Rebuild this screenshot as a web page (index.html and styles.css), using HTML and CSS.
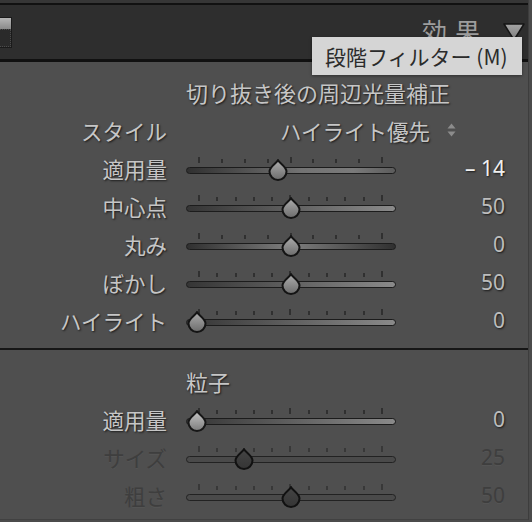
FILE: index.html
```html
<!DOCTYPE html>
<html lang="ja">
<head>
    <meta charset="UTF-8">
    <meta name="viewport" content="width=device-width, initial-scale=1.0">
    <title>効果</title>
    <link rel="stylesheet" href="styles.css">
</head>
<body>
    <!-- gradients shared by the thumbs and the collapse arrow -->
    <svg class="defs" width="0" height="0" aria-hidden="true">
        <defs>
            <linearGradient id="thumbFill" x1="0" y1="0" x2="0" y2="1">
                <stop offset="0" stop-color="#adadad"/>
                <stop offset="1" stop-color="#6c6c6c"/>
            </linearGradient>
            <linearGradient id="thumbOff" x1="0" y1="0" x2="0" y2="1">
                <stop offset="0" stop-color="#444"/>
                <stop offset="1" stop-color="#353535"/>
            </linearGradient>
            <linearGradient id="arrowFill" x1="0" y1="0" x2="0" y2="1">
                <stop offset="0" stop-color="#a5a5a5"/>
                <stop offset="1" stop-color="#7c7c7c"/>
            </linearGradient>
        </defs>
    </svg>

    <div class="panel">
        <div class="top-strip"></div>

        <!-- Header panel -->
        <div class="panel-header">
            <div class="switch"><span class="switch-on"></span><span class="switch-off"></span></div>
            <div class="header-right">
                <h2 class="panel-title">効果</h2>
                <svg class="collapse" width="22" height="18" viewBox="0 0 22 18">
                    <polygon points="1,1 21,1 11,17" fill="url(#arrowFill)" stroke="#151515" stroke-width="1.5" stroke-linejoin="round"/>
                </svg>
            </div>
        </div>

        <div class="tooltip">段階フィルター (M)</div>

        <!-- Vignette -->
        <section class="group group-vignette">
            <div class="group-title">切り抜き後の周辺光量補正</div>

            <div class="row">
                <span class="label">スタイル</span>
                <span class="select">ハイライト優先
                    <svg class="updown" width="9" height="16" viewBox="0 0 9 16">
                        <polygon points="0.5,6.5 8.5,6.5 4.5,1.5" fill="#8c8c8c"/>
                        <polygon points="0.5,9.5 8.5,9.5 4.5,14.5" fill="#8c8c8c"/>
                    </svg>
                </span>
            </div>

            <div class="row">
                <span class="label">適用量</span>
                <div class="slider">
                    <div class="ticks">
                        <i class="tall"></i><i></i><i></i><i></i><i class="tall"></i><i></i><i></i><i></i><i class="tall"></i>
                    </div>
                    <div class="track track-amount"></div>
                    <svg class="thumb" style="left: 81px" width="22" height="22" viewBox="0 0 22 22"><path d="M11 1.2C12.6 4.2 19.5 7.6 19.5 12.5A8.5 8.5 0 0 1 2.5 12.5C2.5 7.6 9.4 4.2 11 1.2Z"/></svg>
                </div>
                <span class="value value-active">– 14</span>
            </div>

            <div class="row">
                <span class="label">中心点</span>
                <div class="slider">
                    <div class="ticks">
                        <i class="tall"></i><i></i><i></i><i></i><i></i><i class="tall"></i><i></i><i></i><i></i><i></i><i class="tall"></i>
                    </div>
                    <div class="track"></div>
                    <svg class="thumb" style="left: 94px" width="22" height="22" viewBox="0 0 22 22"><path d="M11 1.2C12.6 4.2 19.5 7.6 19.5 12.5A8.5 8.5 0 0 1 2.5 12.5C2.5 7.6 9.4 4.2 11 1.2Z"/></svg>
                </div>
                <span class="value">50</span>
            </div>

            <div class="row">
                <span class="label">丸み</span>
                <div class="slider">
                    <div class="ticks">
                        <i class="tall"></i><i></i><i></i><i></i><i class="tall"></i><i></i><i></i><i></i><i class="tall"></i>
                    </div>
                    <div class="track track-round"></div>
                    <svg class="thumb" style="left: 94px" width="22" height="22" viewBox="0 0 22 22"><path d="M11 1.2C12.6 4.2 19.5 7.6 19.5 12.5A8.5 8.5 0 0 1 2.5 12.5C2.5 7.6 9.4 4.2 11 1.2Z"/></svg>
                </div>
                <span class="value">0</span>
            </div>

            <div class="row">
                <span class="label">ぼかし</span>
                <div class="slider">
                    <div class="ticks">
                        <i class="tall"></i><i></i><i></i><i></i><i></i><i class="tall"></i><i></i><i></i><i></i><i></i><i class="tall"></i>
                    </div>
                    <div class="track"></div>
                    <svg class="thumb" style="left: 94px" width="22" height="22" viewBox="0 0 22 22"><path d="M11 1.2C12.6 4.2 19.5 7.6 19.5 12.5A8.5 8.5 0 0 1 2.5 12.5C2.5 7.6 9.4 4.2 11 1.2Z"/></svg>
                </div>
                <span class="value">50</span>
            </div>

            <div class="row">
                <span class="label">ハイライト</span>
                <div class="slider">
                    <div class="ticks">
                        <i class="tall"></i><i></i><i></i><i></i><i></i><i class="tall"></i><i></i><i></i><i></i><i></i><i class="tall"></i>
                    </div>
                    <div class="track"></div>
                    <svg class="thumb" style="left: 0px" width="22" height="22" viewBox="0 0 22 22"><path d="M11 1.2C12.6 4.2 19.5 7.6 19.5 12.5A8.5 8.5 0 0 1 2.5 12.5C2.5 7.6 9.4 4.2 11 1.2Z"/></svg>
                </div>
                <span class="value">0</span>
            </div>
        </section>

        <div class="divider"></div>

        <!-- Grain -->
        <section class="group group-grain">
            <div class="group-title">粒子</div>

            <div class="row">
                <span class="label">適用量</span>
                <div class="slider">
                    <div class="ticks">
                        <i class="tall"></i><i></i><i></i><i></i><i></i><i class="tall"></i><i></i><i></i><i></i><i></i><i class="tall"></i>
                    </div>
                    <div class="track"></div>
                    <svg class="thumb thumb-light" style="left: 0px" width="22" height="22" viewBox="0 0 22 22"><path d="M11 1.2C12.6 4.2 19.5 7.6 19.5 12.5A8.5 8.5 0 0 1 2.5 12.5C2.5 7.6 9.4 4.2 11 1.2Z"/></svg>
                </div>
                <span class="value">0</span>
            </div>

            <div class="row row-off">
                <span class="label">サイズ</span>
                <div class="slider">
                    <div class="ticks">
                        <i class="tall"></i><i></i><i></i><i></i><i></i><i class="tall"></i><i></i><i></i><i></i><i></i><i class="tall"></i>
                    </div>
                    <div class="track"></div>
                    <svg class="thumb" style="left: 47px" width="22" height="22" viewBox="0 0 22 22"><path d="M11 1.2C12.6 4.2 19.5 7.6 19.5 12.5A8.5 8.5 0 0 1 2.5 12.5C2.5 7.6 9.4 4.2 11 1.2Z"/></svg>
                </div>
                <span class="value">25</span>
            </div>

            <div class="row row-off">
                <span class="label">粗さ</span>
                <div class="slider">
                    <div class="ticks">
                        <i class="tall"></i><i></i><i></i><i></i><i></i><i class="tall"></i><i></i><i></i><i></i><i></i><i class="tall"></i>
                    </div>
                    <div class="track"></div>
                    <svg class="thumb" style="left: 94px" width="22" height="22" viewBox="0 0 22 22"><path d="M11 1.2C12.6 4.2 19.5 7.6 19.5 12.5A8.5 8.5 0 0 1 2.5 12.5C2.5 7.6 9.4 4.2 11 1.2Z"/></svg>
                </div>
                <span class="value">50</span>
            </div>
        </section>
    </div>
</body>
</html>
```

FILE: styles.css
```css
/* Dasar */
body {
    margin: 0;
    background-color: #4b4b4b;
    font-family: "Noto Sans CJK JP", "Noto Sans", sans-serif;
    overflow: hidden;
}

.defs {
    position: absolute;
    width: 0;
    height: 0;
}

.panel {
    position: relative;
    width: 528px;
    border-right: 1px solid #3d3d3d;
    background-color: #4f4f4f;
}

.top-strip {
    height: 3px;
    background-color: #363636;
}

/* Header */
.panel-header {
    height: 54px;
    border-top: 2px solid #111;
    border-bottom: 3px solid #111;
    background-color: #2e2e2e;
    display: flex;
    align-items: center;
    justify-content: space-between;
    padding-right: 3px;
}

.switch {
    width: 11px;
    height: 29px;
    border: 1px solid #1a1a1a;
    border-left: none;
    display: flex;
    flex-direction: column;
}

.switch-on {
    height: 11px;
    background: linear-gradient(#b6b6b6, #8a8a8a);
}

.switch-off {
    flex: 1;
    background-color: #2a2a2a;
    border: 1px dotted #4c4c4c;
    border-left: none;
}

.header-right {
    display: flex;
    align-items: center;
}

.panel-title {
    margin: 0 15px 3px 0;
    font-size: 25px;
    font-weight: normal;
    line-height: 25px;
    letter-spacing: 8px;
    color: #9d9d9d;
}

.collapse {
    display: block;
}

/* Tooltip */
.tooltip {
    position: absolute;
    left: 312px;
    top: 37px;
    width: 197px;
    height: 38px;
    padding-left: 13px;
    line-height: 38px;
    font-size: 21px;
    color: #2b2b2b;
    background-color: #d5d5d5;
    box-shadow: 0 1px 3px rgba(0,0,0,0.4);
    white-space: nowrap;
    z-index: 2;
}

/* Groups */
.group-vignette {
    padding: 11px 0 9px;
}

.group-grain {
    padding: 12px 0 5px;
    border-bottom: 1px solid #414141;
}

.divider {
    height: 2px;
    background-color: #161616;
}

.group-title {
    height: 38px;
    line-height: 38px;
    padding-left: 186px;
    font-size: 22px;
    color: #c6c6c6;
    text-shadow: 1px 1px 2px rgba(0,0,0,0.7);
}

.row {
    display: grid;
    grid-template-columns: 167px 210px 90px;
    column-gap: 19px;
    height: 38px;
    align-items: center;
}

.label {
    text-align: right;
    font-size: 21.5px;
    color: #c6c6c6;
    text-shadow: 1px 1px 2px rgba(0,0,0,0.7);
    white-space: nowrap;
}

.select {
    grid-column: 2 / 4;
    padding-left: 94px;
    display: flex;
    align-items: center;
    font-size: 21.5px;
    color: #c6c6c6;
    text-shadow: 1px 1px 2px rgba(0,0,0,0.7);
}

.updown {
    margin-left: 17px;
}

.value {
    text-align: right;
    font-family: "Noto Sans", sans-serif;
    font-size: 21px;
    color: #bdbdbd;
    text-shadow: 1px 1px 2px rgba(0,0,0,0.7);
}

.value-active {
    color: #f0f0f0;
}

/* Slider */
.slider {
    position: relative;
    height: 22px;
    margin-top: 4px;
}

.ticks {
    height: 4px;
    display: flex;
    align-items: flex-end;
    justify-content: space-between;
    padding: 0 13px 0 12px;
}

.ticks i {
    width: 2px;
    height: 4px;
    background-color: #303030;
}

.ticks i.tall {
    height: 6px;
}

.track {
    margin-top: 4px;
    height: 7px;
    box-sizing: border-box;
    border: 1.5px solid #1c1c1c;
    border-radius: 4px;
    background: linear-gradient(to right, #353535, #8a8a8a);
}

.track-amount {
    background: linear-gradient(to right, #303030, #737373 55%, #7a7a7a 80%, #5c5c5c);
}

.track-round {
    background: linear-gradient(to right, #303030, #7e7e7e 50%, #303030);
}

.thumb {
    position: absolute;
    top: 0;
}

.thumb path {
    fill: url(#thumbFill);
    stroke: #141414;
    stroke-width: 2;
}

.thumb-light {
    filter: brightness(1.15);
}

/* Disabled rows */
.row-off .label,
.row-off .value {
    color: #3e3e3e;
    text-shadow: 0 1px 0 rgba(255,255,255,0.05);
}

.row-off .track {
    background: #4a4a4a;
    border-color: #222;
}

.row-off .ticks i {
    background-color: #383838;
}

.row-off .thumb path {
    fill: url(#thumbOff);
    stroke: #111;
}
```
